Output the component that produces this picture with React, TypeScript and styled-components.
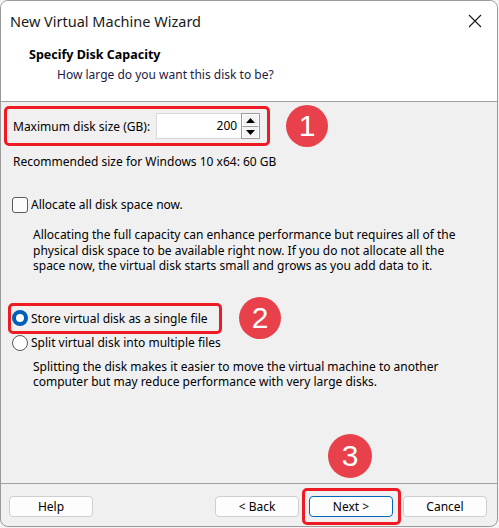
import styled, { createGlobalStyle } from "styled-components";

const GlobalStyle = createGlobalStyle`
  html, body {
    margin: 0;
    padding: 0;
    background: #f4f4f4;
  }
  body {
    font-family: "Noto Sans", "Open Sans", sans-serif;
    font-size: 12px;
    color: #000;
  }
`;

const App = () => {
  return (
    <>
      <GlobalStyle />
      <Window>
        <TitleBar>
          <WindowTitle>New Virtual Machine Wizard</WindowTitle>
          <CloseButton aria-label="Close">
            <svg width="14" height="14" viewBox="0 0 14 14">
              <path d="M1 1 L13 13 M13 1 L1 13" stroke="#1a1a1a" strokeWidth="1.1" />
            </svg>
          </CloseButton>
        </TitleBar>
        <Header>
          <HeaderTitle>Specify Disk Capacity</HeaderTitle>
          <HeaderSub>How large do you want this disk to be?</HeaderSub>
        </Header>

        <Body>
          <MarkRow>
            <SizeBox>
              <span>Maximum disk size (GB):</span>
              <SpinField>
                <SpinInput>200</SpinInput>
                <SpinButtons>
                  <SpinButton>
                    <svg width="9" height="5" viewBox="0 0 9 5">
                      <path d="M4.5 0 L9 5 L0 5 Z" fill="#000" />
                    </svg>
                  </SpinButton>
                  <SpinButton>
                    <svg width="9" height="5" viewBox="0 0 9 5">
                      <path d="M0 0 L9 0 L4.5 5 Z" fill="#000" />
                    </svg>
                  </SpinButton>
                </SpinButtons>
              </SpinField>
            </SizeBox>
            <Badge>1</Badge>
          </MarkRow>
          <Recommended>Recommended size for Windows 10 x64: 60 GB</Recommended>

          <CheckRow>
            <CheckBox />
            <span>Allocate all disk space now.</span>
          </CheckRow>
          <Note>
            Allocating the full capacity can enhance performance but requires all of the
            <br />
            physical disk space to be available right now. If you do not allocate all the
            <br />
            space now, the virtual disk starts small and grows as you add data to it.
          </Note>

          <RadioMarkRow>
            <RadioBox>
              <Radio $checked />
              <span>Store virtual disk as a single file</span>
            </RadioBox>
            <Badge>2</Badge>
          </RadioMarkRow>
          <RadioRow>
            <Radio />
            <span>Split virtual disk into multiple files</span>
          </RadioRow>
          <Note $gap={7}>
            Splitting the disk makes it easier to move the virtual machine to another
            <br />
            computer but may reduce performance with very large disks.
          </Note>
        </Body>

        <Footer>
          <Button>Help</Button>
          <Spacer />
          <Button>&lt; Back</Button>
          <Highlight>
            <FloatBadge>3</FloatBadge>
            <Button $primary>Next &gt;</Button>
          </Highlight>
          <Button>Cancel</Button>
        </Footer>
      </Window>
    </>
  );
};

export default App;

const Window = styled.div`
  box-sizing: border-box;
  width: 498px;
  height: 527px;
  display: flex;
  flex-direction: column;
  background: #f0f0f0;
  border: 1px solid #9a9a9a;
  border-radius: 8px;
  overflow: hidden;
`;

const TitleBar = styled.div`
  height: 39px;
  display: flex;
  align-items: center;
  justify-content: space-between;
  padding: 0 12px 0 9px;
  background: #fff;
`;

const WindowTitle = styled.div`
  font-size: 14.5px;
  color: #1a1a1a;
`;

const CloseButton = styled.div`
  width: 20px;
  height: 20px;
  display: flex;
  align-items: center;
  justify-content: center;
`;

const Header = styled.div`
  height: 61px;
  background: #fff;
  border-bottom: 1px solid #a0a0a0;
  padding-left: 28px;
`;

const HeaderTitle = styled.div`
  font-weight: 700;
  font-size: 12.5px;
  line-height: 18px;
  margin-top: 6px;
`;

const HeaderSub = styled.div`
  margin-left: 28px;
  line-height: 18px;
  margin-top: 2px;
  color: #1c1a45;
`;

const Body = styled.div`
  flex: 1;
  padding: 4px 0 0 3px;
`;

const MarkRow = styled.div`
  display: flex;
  align-items: center;
  gap: 16px;
`;

const RedFrame = styled.div`
  box-sizing: border-box;
  border: 3px solid #ee1b24;
  border-radius: 5px;
  display: flex;
  align-items: center;
`;

const SizeBox = styled(RedFrame)`
  width: 266px;
  height: 40px;
  padding-left: 6px;
  gap: 6px;
`;

const SpinField = styled.div`
  display: flex;
  height: 26px;
`;

const SpinInput = styled.div`
  box-sizing: border-box;
  width: 85px;
  height: 26px;
  background: #fff;
  border: 1px solid #d9d9d9;
  border-right: none;
  text-align: right;
  padding-right: 4px;
  line-height: 24px;
`;

const SpinButtons = styled.div`
  display: flex;
  flex-direction: column;
  width: 19px;
  border: 1px solid #9c9c9c;
  box-sizing: border-box;
`;

const SpinButton = styled.div`
  flex: 1;
  display: flex;
  align-items: center;
  justify-content: center;
  background: #f3f3f3;
  border: 1px solid #fff;
  & + & {
    border-top: 1px solid #9c9c9c;
  }
`;

const Badge = styled.div`
  width: 42px;
  height: 42px;
  margin: -6px 0;
  border-radius: 50%;
  background: #e8414b;
  color: #fff;
  font-family: "Liberation Sans", Arial, sans-serif;
  font-size: 30px;
  display: flex;
  align-items: center;
  justify-content: center;
  flex-shrink: 0;
`;

const Recommended = styled.div`
  margin: 8px 0 0 9px;
  line-height: 16px;
`;

const CheckRow = styled.div`
  display: flex;
  align-items: center;
  gap: 3px;
  margin: 26px 0 0 8px;
  line-height: 18px;
`;

const CheckBox = styled.div`
  box-sizing: border-box;
  width: 16px;
  height: 16px;
  border: 1px solid #5a5a5a;
  border-radius: 3px;
  background: #fbfbfb;
`;

const Note = styled.p<{ $gap?: number }>`
  margin: ${(p) => p.$gap ?? 13}px 0 0 29px;
  line-height: 15.5px;
`;

const RadioMarkRow = styled(MarkRow)`
  margin-top: 29px;
  padding-left: 4px;
  gap: 17px;
`;

const RadioBox = styled(RedFrame)`
  width: 214px;
  height: 31px;
  padding-left: 1px;
  gap: 3px;
`;

const Radio = styled.div<{ $checked?: boolean }>`
  box-sizing: border-box;
  width: 16px;
  height: 16px;
  border-radius: 50%;
  border: ${(p) => (p.$checked ? "4px solid #005fb8" : "1px solid #5a5a5a")};
  background: #fff;
`;

const RadioRow = styled.div`
  display: flex;
  align-items: center;
  gap: 3px;
  margin: 0 0 0 8px;
  line-height: 18px;
`;

const Footer = styled.div`
  box-sizing: border-box;
  height: 43px;
  border-top: 1px solid #a0a0a0;
  display: flex;
  align-items: flex-start;
  gap: 10px;
  padding: 12px 10px 0 8px;
  flex-shrink: 0;
`;

const Spacer = styled.div`
  flex: 1;
`;

const Button = styled.div<{ $primary?: boolean }>`
  box-sizing: border-box;
  width: 84px;
  height: 21px;
  border-radius: 4px;
  border: 1px solid ${(p) => (p.$primary ? "#0067c0" : "#cfcfcf")};
  background: #fdfdfd;
  display: flex;
  align-items: center;
  justify-content: center;
  font-size: 12px;
`;

const Highlight = styled.div`
  position: relative;
  &::after {
    content: "";
    position: absolute;
    inset: -8px -8px -8px -7px;
    border: 3px solid #ee1b24;
    border-radius: 5px;
  }
`;

const FloatBadge = styled(Badge)`
  position: absolute;
  left: 19px;
  top: -62px;
  width: 44px;
  height: 44px;
  margin: 0;
`;
